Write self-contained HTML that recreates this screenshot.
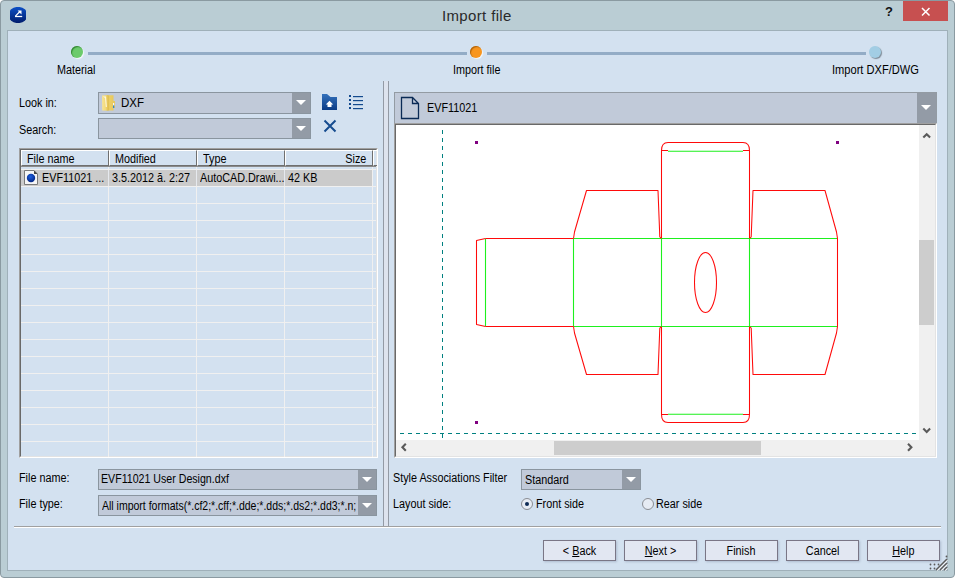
<!DOCTYPE html>
<html><head><meta charset="utf-8">
<style>
*{margin:0;padding:0;box-sizing:border-box}
html,body{width:955px;height:578px;overflow:hidden;background:#fff}
body{position:relative;font-family:"Liberation Sans",sans-serif;font-size:12px;letter-spacing:0;color:#000}
.a{position:absolute}
.t{position:absolute;white-space:nowrap;line-height:13px;margin-left:-1px;letter-spacing:0;transform:scaleX(0.9);transform-origin:0 0}
#frame{left:0;top:0;width:955px;height:578px;background:#bacdd4;border:1px solid #8a9aa1;border-radius:4px}
#client{left:7px;top:30px;width:941px;height:541px;background:#d3e1f0;border:1px solid #9fb0b9}
.combo{position:absolute;background:#c1cad9;border:1px solid #8a959f}
.combo .dd{position:absolute;right:0;top:0;bottom:0;width:18px;background:#939ba6}
.combo .dd:after{content:"";position:absolute;left:4px;top:7px;border-left:5px solid transparent;border-right:5px solid transparent;border-top:5px solid #fff}
.btn{position:absolute;top:540px;width:73px;height:21px;background:#e2e7f2;border:1px solid #7a7686;box-shadow:1px 1px 2px rgba(110,120,150,.35);text-align:center;line-height:18px;padding-top:1px;font-size:12px}
.u{text-decoration:underline}
.bt{display:inline-block;transform:scaleX(0.9);transform-origin:50% 0}
.dot{position:absolute;width:12px;height:12px;border-radius:50%}
.vl{position:absolute;width:1px;background:#f0f0f0}
.hl{position:absolute;height:1px;background:#f0f0f0}
.radio{position:absolute;width:12px;height:12px;border-radius:50%;border:1px solid #8a8d93;background:#e6ebf3}
</style></head>
<body>
<div id="frame" class="a"></div>
<!-- title icon -->
<svg class="a" style="left:10px;top:7px" width="16" height="16"><defs><linearGradient id="ig" x1="0" y1="0" x2="0" y2="1"><stop offset="0" stop-color="#0c4fc6"/><stop offset="1" stop-color="#001c6c"/></linearGradient></defs><ellipse cx="8" cy="8" rx="9.7" ry="8.1" fill="url(#ig)"/>
<path d="M5 9.5 H12.2" stroke="#fff" stroke-width="1.25"/><path d="M5.4 9.1 L10 4.5" stroke="#fff" stroke-width="1.25"/><path d="M7.6 3.5 H11.5 V7.4 Z" fill="#fff"/></svg>
<div class="t" style="left:442px;top:6px;font-size:15px;letter-spacing:0.35px;line-height:20px;color:#2a2a2a;transform:none;margin-left:0">Import file</div>
<div class="t" style="left:885px;top:5px;font-size:13px;font-weight:bold;letter-spacing:0;color:#111;transform:none;margin-left:0">?</div>
<div class="a" style="left:903px;top:1px;width:45px;height:20px;background:#c75050"></div>
<svg class="a" style="left:903px;top:1px" width="45" height="20"><path d="M19 7 L26.5 14.5 M26.5 7 L19 14.5" stroke="#fff" stroke-width="1.5"/></svg>

<div id="client" class="a"></div>

<!-- steps -->
<div class="a" style="left:88px;top:52px;width:379px;height:3px;background:#93acc6"></div>
<div class="a" style="left:487px;top:52px;width:379px;height:3px;background:#93acc6"></div>
<div class="dot" style="left:71px;top:46px;background:#6ccb6c;box-shadow:inset 1px 1px 1px rgba(30,110,30,.75),1px 1px 1px #f4f8fb"></div>
<div class="dot" style="left:470px;top:46px;background:#f8961f;box-shadow:inset 1px 1px 1px rgba(150,80,0,.75),1px 1px 1px #f4f8fb"></div>
<div class="dot" style="left:869px;top:46px;background:#a2cde4;box-shadow:1px 1px 1px #7d8a96"></div>
<div class="t" style="left:58px;top:64px">Material</div>
<div class="t" style="left:454px;top:64px">Import file</div>
<div class="t" style="left:833px;top:64px;transform:scaleX(0.925)">Import DXF/DWG</div>


<!-- left panel -->
<div class="t" style="left:20px;top:97px">Look in:</div>
<div class="t" style="left:20px;top:124px">Search:</div>
<div class="combo" style="left:98px;top:92px;width:213px;height:22px"><div class="dd"></div></div>
<svg class="a" style="left:99px;top:92px" width="20" height="20" viewBox="0 0 20 20">
 <defs><linearGradient id="fg" x1="0" x2="1"><stop offset="0" stop-color="#f7e496"/><stop offset="0.6" stop-color="#f2d978"/><stop offset="1" stop-color="#e0bd4c"/></linearGradient>
 <linearGradient id="fb" x1="0" x2="1"><stop offset="0" stop-color="#d8b645"/><stop offset="0.3" stop-color="#eccf66"/><stop offset="1" stop-color="#e6c65a"/></linearGradient></defs>
 <path d="M8.5 3.2 H14.5 V9 H16 V16 H14.5 V18.5 H8.5 Z" fill="url(#fb)"/>
 <path d="M3 3.5 L9 3 L9.3 18.8 L3.2 18.5 Z" fill="url(#fg)"/>
 <path d="M6.5 4.5 L7.3 15" stroke="#fffbe6" stroke-width="1"/>
 <path d="M5 4.3 L5.5 5.5" stroke="#ffffff" stroke-width="1"/>
 <rect x="14" y="11" width="1.2" height="2.5" fill="#f2f6ff"/>
 <rect x="14" y="13.5" width="1.2" height="2.5" fill="#2f86d6"/>
</svg>
<div class="t" style="left:122px;top:97px;font-size:12px;transform:scaleX(0.96)">DXF</div>
<div class="combo" style="left:98px;top:118px;width:213px;height:21px"><div class="dd"></div></div>
<!-- folder up icon -->
<svg class="a" style="left:321px;top:94px" width="17" height="17" viewBox="0 0 17 17">
 <defs><linearGradient id="bg1" x1="0" y1="0" x2="0" y2="1"><stop offset="0" stop-color="#3471bb"/><stop offset="1" stop-color="#0a3c86"/></linearGradient></defs>
 <path d="M1 0 H6 L9.5 3 H16 V16 H1 Z" fill="url(#bg1)"/>
 <path d="M8.5 6.8 L12.2 10.4 H10.5 V13 H6.5 V10.4 H4.8 Z" fill="#fff"/>
</svg>
<!-- list icon -->
<svg class="a" style="left:349px;top:95px" width="15" height="15" viewBox="0 0 15 15">
 <g fill="#134a8e"><rect x="0" y="0" width="2" height="2"/><rect x="0" y="4" width="2" height="2"/><rect x="0" y="8" width="2" height="2"/><rect x="0" y="12" width="2" height="2"/>
 <rect x="4" y="1" width="10" height="1.2"/><rect x="4" y="5" width="10" height="1.2"/><rect x="4" y="9" width="10" height="1.2"/><rect x="4" y="13" width="10" height="1.2"/></g>
</svg>
<!-- X icon -->
<svg class="a" style="left:323px;top:119px" width="14" height="14" viewBox="0 0 14 14"><path d="M1.5 1.5 L12.5 12.5 M12.5 1.5 L1.5 12.5" stroke="#164c8f" stroke-width="2"/></svg>

<!-- list -->
<div class="a" style="left:19px;top:148px;width:359px;height:310px;border-left:1px solid #a0a0a0;border-top:1px solid #a0a0a0;border-right:1px solid #fff;border-bottom:1px solid #fff"><div class="a" style="left:0;top:0;right:0;bottom:0;border-left:1px solid #696969;border-top:1px solid #696969;border-right:1px solid #e3e3e3;border-bottom:1px solid #e3e3e3"></div></div>
<div class="a" style="left:21px;top:150px;width:357px;height:17px;"></div>
<div class="a" style="left:21px;top:150px;width:88px;height:16px;border-top:1px solid #fff;border-left:1px solid #fff;border-right:1px solid #6f6f6f;border-bottom:1px solid #6f6f6f"><div class="t" style="left:6px;top:2px">File name</div></div>
<div class="a" style="left:109px;top:150px;width:88px;height:16px;border-top:1px solid #fff;border-left:1px solid #fff;border-right:1px solid #6f6f6f;border-bottom:1px solid #6f6f6f"><div class="t" style="left:6px;top:2px">Modified</div></div>
<div class="a" style="left:197px;top:150px;width:88px;height:16px;border-top:1px solid #fff;border-left:1px solid #fff;border-right:1px solid #6f6f6f;border-bottom:1px solid #6f6f6f"><div class="t" style="left:6px;top:2px">Type</div></div>
<div class="a" style="left:285px;top:150px;width:88px;height:16px;border-top:1px solid #fff;border-left:1px solid #fff;border-right:1px solid #6f6f6f;border-bottom:1px solid #6f6f6f"><div class="t" style="right:6px;top:2px;transform-origin:100% 0;margin-left:0">Size</div></div>
<div class="a" style="left:373px;top:150px;width:4px;height:16px;border-top:1px solid #fff;border-left:1px solid #fff;border-bottom:1px solid #6f6f6f"></div>

<div class="vl" style="left:108px;top:167px;height:290px"></div>
<div class="vl" style="left:196px;top:167px;height:290px"></div>
<div class="vl" style="left:284px;top:167px;height:290px"></div>
<div class="vl" style="left:372px;top:167px;height:290px"></div>
<div class="hl" style="left:21px;top:169px;width:355px"></div>
<div class="hl" style="left:21px;top:186px;width:355px"></div>
<div class="hl" style="left:21px;top:203px;width:355px"></div>
<div class="hl" style="left:21px;top:220px;width:355px"></div>
<div class="hl" style="left:21px;top:237px;width:355px"></div>
<div class="hl" style="left:21px;top:254px;width:355px"></div>
<div class="hl" style="left:21px;top:271px;width:355px"></div>
<div class="hl" style="left:21px;top:288px;width:355px"></div>
<div class="hl" style="left:21px;top:305px;width:355px"></div>
<div class="hl" style="left:21px;top:322px;width:355px"></div>
<div class="hl" style="left:21px;top:339px;width:355px"></div>
<div class="hl" style="left:21px;top:356px;width:355px"></div>
<div class="hl" style="left:21px;top:373px;width:355px"></div>
<div class="hl" style="left:21px;top:390px;width:355px"></div>
<div class="hl" style="left:21px;top:407px;width:355px"></div>
<div class="hl" style="left:21px;top:424px;width:355px"></div>
<div class="hl" style="left:21px;top:441px;width:355px"></div>
<div class="a" style="left:21px;top:166px;width:355px;height:1px;background:#8a8a8a"></div>
<div class="a" style="left:21px;top:170px;width:351px;height:16px;background:#cbcbcb"></div>
<div class="a" style="left:108px;top:170px;width:1px;height:16px;background:#e6e9ee"></div>
<div class="a" style="left:196px;top:170px;width:1px;height:16px;background:#e6e9ee"></div>
<div class="a" style="left:284px;top:170px;width:1px;height:16px;background:#e6e9ee"></div>
<svg class="a" style="left:24px;top:170px" width="14" height="15" viewBox="0 0 14 15">
 <defs><radialGradient id="ball" cx="0.45" cy="0.35" r="0.6"><stop offset="0" stop-color="#1d5fe0"/><stop offset="1" stop-color="#062a8a"/></radialGradient></defs>
 <path d="M0.5 0.5 H10 L13.5 4 V14.5 H0.5 Z" fill="#f6f6f6" stroke="#7a7a7a"/>
 <path d="M10 0.5 L13.5 4 H10 Z" fill="#444"/>
 <circle cx="7" cy="8" r="4.2" fill="url(#ball)"/>
</svg>
<div class="t" style="left:43px;top:172px">EVF11021 ...</div>
<div class="t" style="left:113px;top:172px">3.5.2012 ă. 2:27</div>
<div class="t" style="left:201px;top:172px">AutoCAD.Drawi...</div>
<div class="t" style="left:289px;top:172px">42 KB</div>


<div class="t" style="left:20px;top:472px">File name:</div>
<div class="t" style="left:20px;top:498px">File type:</div>
<div class="combo" style="left:98px;top:469px;width:279px;height:21px"><div class="dd"></div></div>
<div class="t" style="left:102px;top:473px;transform:scaleX(0.885)">EVF11021 User Design.dxf</div>
<div class="combo" style="left:98px;top:495px;width:279px;height:21px;overflow:hidden"><div class="t" style="left:4px;top:4px;width:300px;overflow:hidden;transform:scaleX(0.875)">All import formats(*.cf2;*.cff;*.dde;*.dds;*.ds2;*.dd3;*.n;</div><div class="dd"></div></div>

<!-- splitter -->
<div class="a" style="left:383px;top:81px;width:6px;height:445px;background:#dde3ee;border-left:1px solid #939aa5;border-right:1px solid #939aa5"></div>
<!-- right header -->
<style>.big .dd:after{top:12px;left:4px}</style><div class="combo big" style="left:394px;top:92px;width:543px;height:33px;border-color:#939ba3"><div class="dd" style="width:19px"></div></div>
<svg class="a" style="left:396px;top:92px" width="28" height="32"><path d="M5.5 5.5 H16.5 L22.5 11.5 V26.5 H5.5 Z M16.5 5.5 V11.5 H22.5" fill="none" stroke="#0a2a55" stroke-width="1.3" stroke-linejoin="miter"/></svg>
<div class="t" style="left:428px;top:102px">EVF11021</div>
<!-- canvas -->
<div class="a" style="left:394px;top:123px;width:543px;height:335px;background:#fff;border-top:1px solid #a0a0a0;border-left:1px solid #a0a0a0;border-right:1px solid #fff;border-bottom:1px solid #fff">
 <div class="a" style="left:0;top:0;right:0;bottom:0;border-top:1px solid #696969;border-left:1px solid #696969;border-right:1px solid #e3e3e3;border-bottom:1px solid #e3e3e3"></div>
</div>
<div class="a" style="left:919px;top:125px;width:16px;height:331px;background:#f0f0f0"></div>
<div class="a" style="left:396px;top:440px;width:539px;height:16px;background:#f0f0f0"></div>
<div class="a" style="left:919px;top:240px;width:15px;height:85px;background:#cdcdcd"></div>
<div class="a" style="left:554px;top:441px;width:207px;height:14px;background:#cdcdcd"></div>
<svg class="a" style="left:396px;top:125px" width="540" height="331">
 <g fill="none" stroke="#5a5a5a" stroke-width="2.1">
  <path d="M527.3 12.6 L530.7 9.2 L534.1 12.6"/>
  <path d="M527.3 303.6 L530.7 307 L534.1 303.6"/>
  <path d="M9.8 318.8 L6.4 322.3 L9.8 325.8"/>
  <path d="M512 318.8 L515.4 322.3 L512 325.8"/>
 </g>
</svg>
<!-- drawing -->
<svg class="a" style="left:0;top:0" width="955" height="578" shape-rendering="auto">
 <g stroke="#008080" stroke-width="1" stroke-dasharray="4 4" fill="none">
  <path d="M442.5 130 V438"/>
  <path d="M400 433.5 H919"/>
 </g>
 <g fill="#800080"><rect x="475" y="141" width="3" height="3"/><rect x="836" y="141" width="3" height="3"/><rect x="475" y="421" width="3" height="3"/></g>
 <g stroke="#1ef01e" stroke-width="1.1" fill="none">
  <path d="M485.5 238.5 V326.5"/>
  <path d="M573.5 238.5 H837.5 M573.5 326.5 H837.5 M573.5 238.5 V326.5 M661.5 238.5 V326.5 M749.5 238.5 V326.5"/>
  <path d="M668 151.2 H743 M668 414.3 H743"/>
 </g>
 <g stroke="#ff0a0a" stroke-width="1.05" fill="none" stroke-linejoin="round">
  <path d="M485.5 238.5 L476.5 240.5 V324.5 L485.5 326.5"/>
  <path d="M485.5 238.5 H573.5 M485.5 326.5 H573.5"/>
  <path d="M573.5 238.5 L574.5 232 L586.5 190.5 H658 L659.8 236.8 L661.5 238.5"/>
  <path d="M573.5 326.5 L574.5 333 L586.5 374.5 H658 L659.8 328.2 L661.5 326.5"/>
  <path d="M749.5 238.5 L751.2 236.8 L753 190.5 H825 L836.5 232 L837.5 238.5 V326.5 L836.5 333 L825 374.5 H753 L751.2 328.2 L749.5 326.5"/>
  <path d="M661.5 238 V150.5 Q661.5 142.5 668 142.5 H743 Q749.5 142.5 749.5 150.5 V238"/>
  <path d="M661.5 327 V414.5 Q661.5 422.5 668 422.5 H743 Q749.5 422.5 749.5 414.5 V327"/>
  <path d="M661.5 150.5 H668 M743 150.5 H749.5 M661.5 414.5 H668 M743 414.5 H749.5"/>
  <ellipse cx="705.5" cy="282.5" rx="11" ry="30"/>
 </g>
</svg>
<!-- bottom of right panel -->
<div class="t" style="left:394px;top:472px">Style Associations Filter</div>
<div class="t" style="left:394px;top:498px">Layout side:</div>
<div class="combo" style="left:521px;top:469px;width:120px;height:21px"><div class="dd"></div></div>
<div class="t" style="left:526px;top:474px">Standard</div>
<div class="radio" style="left:521px;top:498px"></div>
<div class="a" style="left:525px;top:502px;width:4px;height:4px;border-radius:50%;background:#0d2a55"></div>
<div class="t" style="left:537px;top:498px">Front side</div>
<div class="radio" style="left:642px;top:498px"></div>
<div class="t" style="left:657px;top:498px">Rear side</div>
<!-- separator -->
<div class="a" style="left:14px;top:526px;width:927px;height:1px;background:#a0a0a0"></div>
<div class="a" style="left:14px;top:527px;width:927px;height:1px;background:#fff"></div>
<!-- buttons -->
<div class="btn" style="left:543px"><span class="bt">&lt; <span class="u">B</span>ack</span></div>
<div class="btn" style="left:624px"><span class="bt"><span class="u">N</span>ext &gt;</span></div>
<div class="btn" style="left:705px"><span class="bt">Finish</span></div>
<div class="btn" style="left:786px"><span class="bt">Cancel</span></div>
<div class="btn" style="left:867px"><span class="bt"><span class="u">H</span>elp</span></div>
<!-- grip -->
<svg class="a" style="left:925px;top:550px" width="26" height="24"><g stroke="#fff" stroke-width="1.2" opacity="0.8"><path d="M12 20.5 L22.5 10 M16 20.5 L22.5 14 M20 20.5 L22.5 18"/></g><g stroke="#5a5a5a" stroke-width="1.5"><path d="M11 20 L22 9 M15 20 L22 13 M19 20 L22 17"/></g><g fill="#5a5a5a"><circle cx="5.5" cy="14.5" r="0.9"/><circle cx="9.5" cy="14.5" r="0.9"/><circle cx="13.5" cy="14.5" r="0.9"/><circle cx="5.5" cy="18.5" r="0.9"/><circle cx="9.5" cy="18.5" r="0.9"/><circle cx="21.5" cy="6.5" r="0.9"/></g></svg>
</body></html>
